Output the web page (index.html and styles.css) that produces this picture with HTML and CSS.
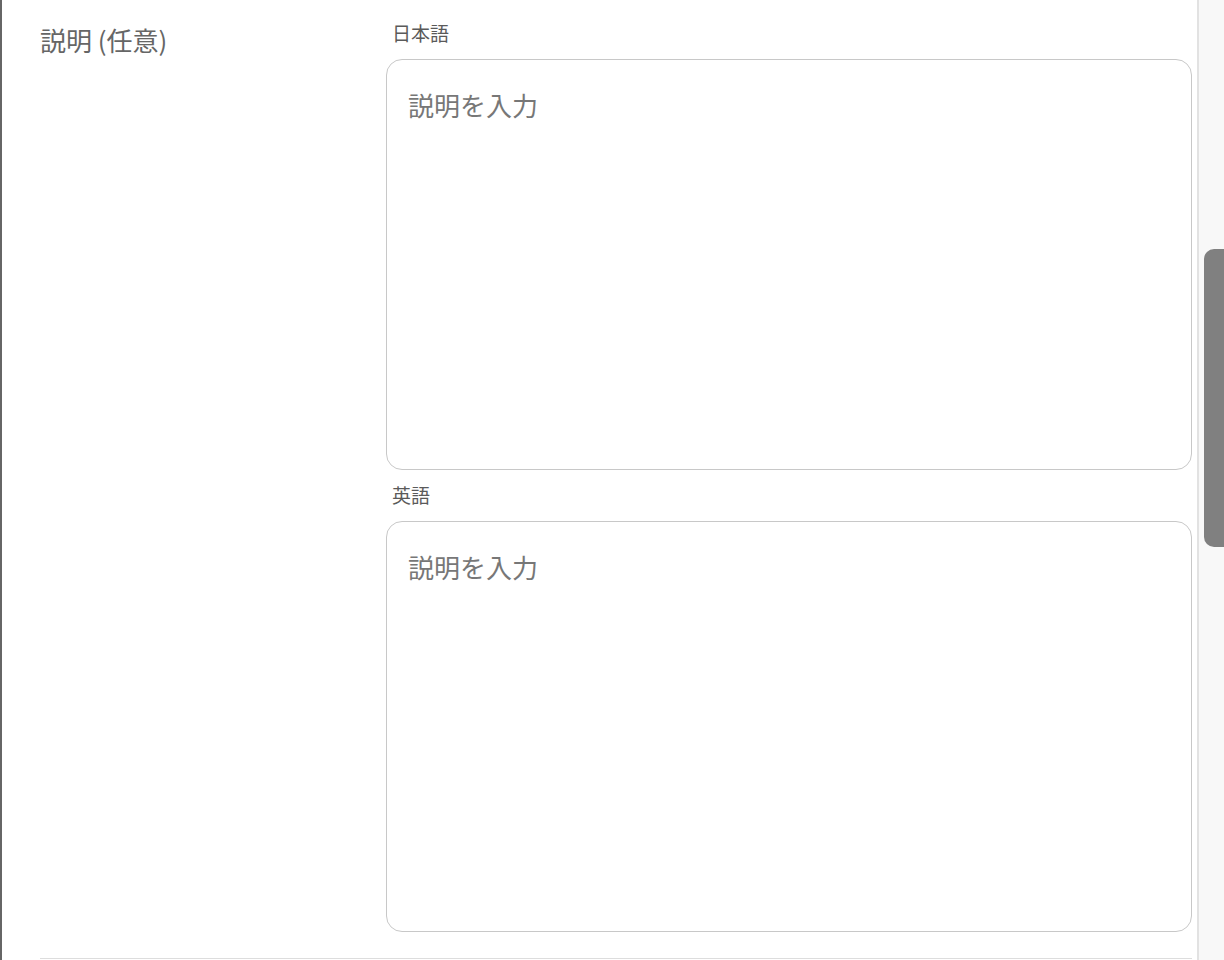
FILE: index.html
```html
<!DOCTYPE html>
<html lang="ja">
<head>
<meta charset="utf-8">
<title>説明</title>
<link rel="stylesheet" href="styles.css">
</head>
<body>
<div class="page">
  <main class="main">
    <section class="row">
      <div class="row-label">説明 (任意)</div>
      <div class="fields">
        <div class="field">
          <label class="field-label" for="desc-ja">日本語</label>
          <textarea id="desc-ja" class="textarea" placeholder="説明を入力"></textarea>
        </div>
        <div class="field">
          <label class="field-label" for="desc-en">英語</label>
          <textarea id="desc-en" class="textarea" placeholder="説明を入力"></textarea>
        </div>
      </div>
    </section>
  </main>
  <div class="scrollbar"><div class="thumb"></div></div>
</div>
</body>
</html>
```

FILE: styles.css
```css
html, body {
  margin: 0;
  padding: 0;
  height: 100%;
  overflow: hidden;
  background: #ffffff;
}
body {
  font-family: "Noto Sans CJK JP", "Noto Sans", "Liberation Sans", sans-serif;
  color: #666;
}
.page {
  display: flex;
  height: 960px;
  width: 1224px;
}
.main {
  border-left: 2px solid #666;
  border-right: 2px solid #e2e2e2;
  padding: 0 5px 0 38px;
  box-sizing: border-box;
  flex: 0 0 1199px;
  background: #fff;
}
.row {
  display: flex;
  padding-top: 21px;
  padding-bottom: 26px;
  border-bottom: 1px solid #dddddd;
}
.row-label {
  flex: 0 0 346px;
  font-size: 26px;
  line-height: 32px;
  margin-top: 3px;
  color: #666;
}
.fields {
  flex: 1;
  display: flex;
  flex-direction: column;
  gap: 13px;
}
.field {
  display: flex;
  flex-direction: column;
}
.field-label {
  font-size: 19px;
  line-height: 24px;
  padding-left: 6px;
  color: #5a5a5a;
}
.textarea {
  margin-top: 14px;
  height: 411px;
  width: 100%;
  box-sizing: border-box;
  border: 1px solid #c8c8c8;
  border-radius: 16px;
  padding: 29px 21px;
  font-family: inherit;
  font-size: 26px;
  line-height: 32px;
  resize: none;
  outline: none;
  color: #333;
  background: #fff;
}
.textarea::placeholder {
  color: #777;
  opacity: 1;
}
.scrollbar {
  flex: 1;
  background: #f8f8f8;
  padding: 249px 0 0 5px;
  box-sizing: border-box;
}
.thumb {
  height: 298px;
  background: #808080;
  border-radius: 10px 0 0 10px;
}
```
